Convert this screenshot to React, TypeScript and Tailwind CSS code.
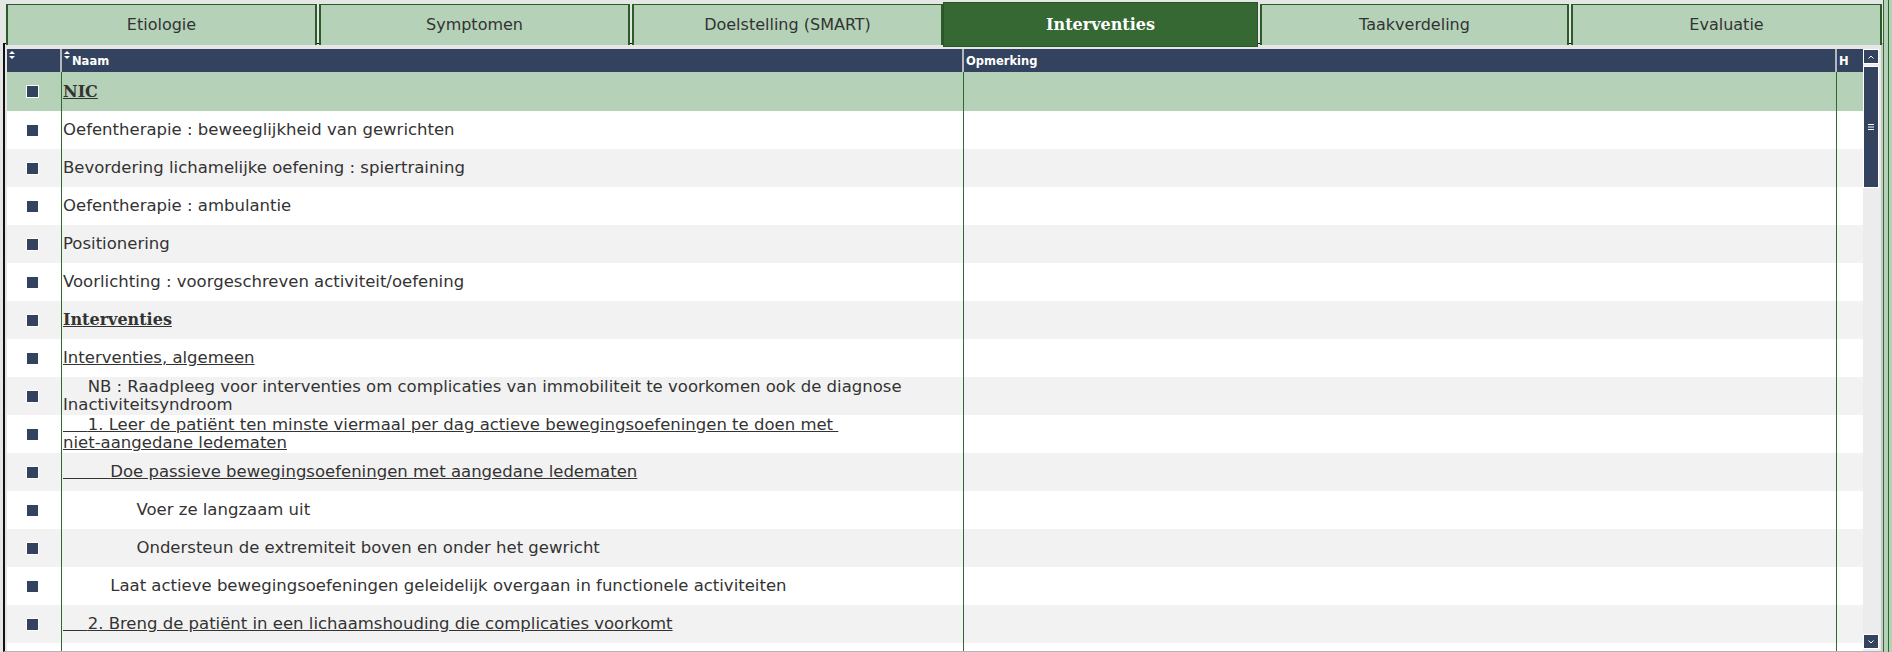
import React from "react";

function SortIcon() {
  return (
    <svg width="6" height="8" viewBox="0 0 6 8" className="block">
      <path d="M3 0 L6 3 L0 3 Z" fill="white" />
      <path d="M0 5 L6 5 L3 8 Z" fill="white" />
    </svg>
  );
}

type Row = {
  lines: string[];
  indent?: number;
  bold?: boolean;
  underline?: boolean;
  green?: boolean;
};

const sp = (n: number) => "\u00a0".repeat(n);

const rows: Row[] = [
  { lines: ["NIC"], bold: true, underline: true, green: true },
  { lines: ["Oefentherapie : beweeglijkheid van gewrichten"] },
  { lines: ["Bevordering lichamelijke oefening : spiertraining"] },
  { lines: ["Oefentherapie : ambulantie"] },
  { lines: ["Positionering"] },
  { lines: ["Voorlichting : voorgeschreven activiteit/oefening"] },
  { lines: ["Interventies"], bold: true, underline: true },
  { lines: ["Interventies, algemeen"], underline: true },
  {
    indent: 5,
    lines: [
      "NB : Raadpleeg voor interventies om complicaties van immobiliteit te voorkomen ook de diagnose",
      "Inactiviteitsyndroom",
    ],
  },
  {
    indent: 5,
    lines: [
      "1. Leer de patiënt ten minste viermaal per dag actieve bewegingsoefeningen te doen met" + sp(1),
      "niet-aangedane ledematen",
    ],
    underline: true,
  },
  { indent: 9, lines: ["Doe passieve bewegingsoefeningen met aangedane ledematen"], underline: true },
  { indent: 14, lines: ["Voer ze langzaam uit"] },
  { indent: 14, lines: ["Ondersteun de extremiteit boven en onder het gewricht"] },
  { indent: 9, lines: ["Laat actieve bewegingsoefeningen geleidelijk overgaan in functionele activiteiten"] },
  { indent: 5, lines: ["2. Breng de patiënt in een lichaamshouding die complicaties voorkomt"], underline: true },
  { lines: [""] },
];

function Tab({ label, width, active }: { label: string; width: string; active?: boolean }) {
  if (active) {
    return (
      <div
        className={`${width} h-[45px] bg-[#356832] border border-[#2a5527] flex items-center justify-center text-white font-bold text-[16px] font-['DejaVu_Serif',serif]`}
      >
        {label}
      </div>
    );
  }
  return (
    <div
      className={`${width} mt-[2px] h-[41px] bg-[#b5d2b8] border-t border-x-2 border-[#2c5a29] flex items-center justify-center text-[#333] text-[16px]`}
    >
      {label}
    </div>
  );
}

export default function App() {
  return (
    <div className="w-[1892px] h-[652px] bg-[#e4e7e4] flex overflow-hidden font-['DejaVu_Sans',sans-serif]">
      <div className="w-[1883px] flex flex-col pt-[2px]">
        {/* Tabs */}
        <div className="flex items-start h-[41px] pl-[6px] relative z-10">
          <Tab label="Etiologie" width="w-[311px]" />
          <div className="w-[2px]" />
          <Tab label="Symptomen" width="w-[311px]" />
          <div className="w-[2px]" />
          <Tab label="Doelstelling (SMART)" width="w-[311px]" />
          <Tab label="Interventies" width="w-[315px]" active />
          <div className="w-[2px]" />
          <Tab label="Taakverdeling" width="w-[309px]" />
          <div className="w-[2px]" />
          <Tab label="Evaluatie" width="w-[311px]" />
        </div>

        {/* Table container */}
        <div className="ml-[3px] flex-1 border-l-2 border-t border-l-[#111] border-t-[#111] border-r-2 border-r-[#c9c9c9] border-b border-b-[#b5b5b5] bg-[#e6e6e6] pt-[5px] pl-[2px] flex min-h-0">
          <div className="flex flex-col w-[1856px]">
            {/* Header */}
            <div className="flex h-[23px] shrink-0 bg-[#33425e] text-white font-bold text-[11.5px] leading-none">
              <div className="w-[55px] border-r-2 border-[#b8b8b8] pl-[2px] pt-[2px]">
                <SortIcon />
              </div>
              <div className="w-[902px] border-r-2 border-[#b8b8b8] flex pl-[2px] pt-[2px]">
                <SortIcon />
                <span className="ml-[2px] mt-[5px]">Naam</span>
              </div>
              <div className="w-[873px] border-r-2 border-[#b8b8b8] pl-[2px] pt-[7px]">Opmerking</div>
              <div className="w-[26px] pl-[2px] pt-[7px]">H</div>
            </div>
            {/* Rows */}
            <div className="flex flex-col">
              {rows.map((r, i) => {
                const bg = r.green ? "bg-[#b5d2b8]" : i % 2 === 1 ? "bg-white" : "bg-[#f2f2f2]";
                const h = i === 0 ? "h-[39px]" : i === rows.length - 1 ? "h-[8px]" : "h-[38px]";
                return (
                  <div key={i} className={`flex ${h} ${bg} shrink-0`}>
                    <div className="w-[55px] border-r border-[#2f6a2d] flex items-center justify-center pr-[3px]">
                      {i < rows.length - 1 && (
                        <div className="w-[13px] h-[13px] bg-[#33425e] border border-white" />
                      )}
                    </div>
                    <div
                      className={`w-[902px] border-r border-[#2f6a2d] pl-[1px] flex flex-col justify-center text-[#333] ${
                        r.bold
                          ? "font-['DejaVu_Serif',serif] font-bold text-[16px]"
                          : "text-[16.5px] leading-[18px]"
                      }`}
                    >
                      {r.lines.map((l, j) => (
                        <div key={j} className="whitespace-nowrap">
                          <span className={r.underline ? "underline" : ""}>
                            {j === 0 && r.indent ? (
                              <span className={r.indent === 5 ? "text-[15.5px]" : ""}>{sp(r.indent)}</span>
                            ) : null}
                            {l}
                          </span>
                        </div>
                      ))}
                    </div>
                    <div className="w-[873px] border-r border-[#2f6a2d]" />
                    <div className="w-[26px]" />
                  </div>
                );
              })}
            </div>
          </div>
          {/* Scrollbar */}
          <div className="w-[17px] bg-[#ececec] flex flex-col items-start">
            <div className="w-[16px] h-[15px] bg-[#33425e] border border-white flex items-center justify-center">
              <svg width="6" height="4" viewBox="0 0 6 4">
                <polyline points="0.5,3.5 3,1 5.5,3.5" fill="none" stroke="white" strokeWidth="1" />
              </svg>
            </div>
            <div className="mt-[2px] w-[16px] h-[122px] bg-[#33425e] border border-white flex items-center justify-center">
              <svg width="6" height="6" viewBox="0 0 6 6">
                <line x1="0" y1="0.5" x2="6" y2="0.5" stroke="white" strokeWidth="1" />
                <line x1="0" y1="3" x2="6" y2="3" stroke="white" strokeWidth="1" />
                <line x1="0" y1="5.5" x2="6" y2="5.5" stroke="white" strokeWidth="1" />
              </svg>
            </div>
            <div className="flex-1" />
            <div className="w-[16px] h-[15px] mb-[2px] bg-[#33425e] border border-white flex items-center justify-center">
              <svg width="6" height="4" viewBox="0 0 6 4">
                <polyline points="0.5,0.5 3,3 5.5,0.5" fill="none" stroke="white" strokeWidth="1" />
              </svg>
            </div>
          </div>
        </div>
      </div>
      {/* Right frame */}
      <div className="w-[9px] flex">
        <div className="w-[5px] bg-[#b5d2b8] border-l border-[#2f6a2d]" />
        <div className="w-[4px] bg-[#b5d2b8] border-l border-[#2f6a2d]" />
      </div>
    </div>
  );
}
